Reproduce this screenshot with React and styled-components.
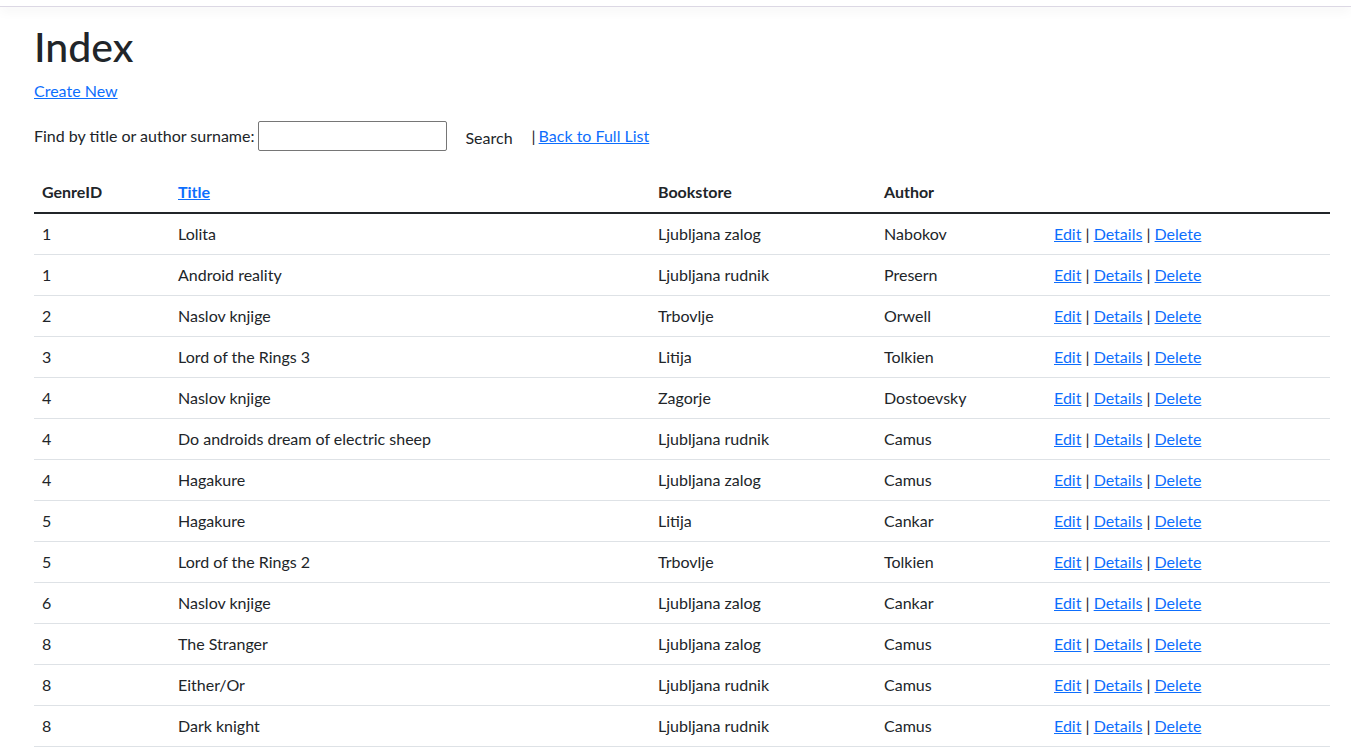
import React from "react"
import styled, { createGlobalStyle } from "styled-components"

const FONT = `"Segoe UI", Lato, "Liberation Sans", sans-serif`

const GlobalStyle = createGlobalStyle`
  body {
    margin: 0;
    font-family: ${FONT};
    font-size: 16px;
    line-height: 1.5;
    color: #212529;
    background: #fff;
  }
  a {
    color: #0d6efd;
    text-decoration: underline;
  }
`

const TopBar = styled.header`
  height: 6px;
  border-bottom: 1px solid #dcd8e4;
  box-shadow: 0 4px 12px rgba(0, 0, 0, 0.05);
  margin-bottom: 16px;
`

const Main = styled.main`
  margin: 0 21px 0 34px;
`

const Heading = styled.h1`
  margin: 0 0 8px;
  font-size: 41px;
  font-weight: 500;
  line-height: 48px;
`

const Para = styled.p`
  margin: 0 0 16px;
`

const SearchForm = styled.form`
  display: flex;
  align-items: center;
  margin: 0 0 19px;
  height: 34px;
`

const Label = styled.label`
  margin-right: 4px;
`

const TextInput = styled.input`
  width: 189px;
  height: 30px;
  box-sizing: border-box;
  border: 1px solid #767676;
  border-radius: 2px;
  padding: 1px 4px;
  font: inherit;
`

const SearchButton = styled.button`
  font: inherit;
  color: #212529;
  background: transparent;
  border: 1px solid transparent;
  padding: 6px 12px;
  margin: 4px 6px 0 5px;
  cursor: pointer;
`

const Sep = styled.span`
  margin-right: 3px;
`

const Table = styled.table`
  width: 100%;
  border-collapse: collapse;
  table-layout: fixed;
`

const Th = styled.th`
  text-align: left;
  font-weight: 700;
  padding: 8px;
  width: ${({ $w }) => $w || "auto"};
  border-bottom: 2px solid #212529;
`

const Td = styled.td`
  padding: 8px;
  border-bottom: 1px solid #dee2e6;
`

const books = [
  [1, "Lolita", "Ljubljana zalog", "Nabokov"],
  [1, "Android reality", "Ljubljana rudnik", "Presern"],
  [2, "Naslov knjige", "Trbovlje", "Orwell"],
  [3, "Lord of the Rings 3", "Litija", "Tolkien"],
  [4, "Naslov knjige", "Zagorje", "Dostoevsky"],
  [4, "Do androids dream of electric sheep", "Ljubljana rudnik", "Camus"],
  [4, "Hagakure", "Ljubljana zalog", "Camus"],
  [5, "Hagakure", "Litija", "Cankar"],
  [5, "Lord of the Rings 2", "Trbovlje", "Tolkien"],
  [6, "Naslov knjige", "Ljubljana zalog", "Cankar"],
  [8, "The Stranger", "Ljubljana zalog", "Camus"],
  [8, "Either/Or", "Ljubljana rudnik", "Camus"],
  [8, "Dark knight", "Ljubljana rudnik", "Camus"],
]

const App = () => (
  <>
    <GlobalStyle />
    <TopBar />
    <Main>
      <Heading>Index</Heading>
      <Para>
        <a href="#">Create New</a>
      </Para>
      <SearchForm onSubmit={(e) => e.preventDefault()}>
        <Label>Find by title or author surname:</Label>
        <TextInput type="text" />
        <SearchButton type="submit">Search</SearchButton>
        <Sep>|</Sep>
        <a href="#">Back to Full List</a>
      </SearchForm>
      <Table>
        <thead>
          <tr>
            <Th $w="120px">GenreID</Th>
            <Th $w="464px">
              <a href="#">Title</a>
            </Th>
            <Th $w="210px">Bookstore</Th>
            <Th $w="154px">Author</Th>
            <Th />
          </tr>
        </thead>
        <tbody>
          {books.map(([genre, title, store, author], i) => (
            <tr key={i}>
              <Td>{genre}</Td>
              <Td>{title}</Td>
              <Td>{store}</Td>
              <Td>{author}</Td>
              <Td>
                <a href="#">Edit</a> | <a href="#">Details</a> |{" "}
                <a href="#">Delete</a>
              </Td>
            </tr>
          ))}
        </tbody>
      </Table>
    </Main>
  </>
)

export default App
